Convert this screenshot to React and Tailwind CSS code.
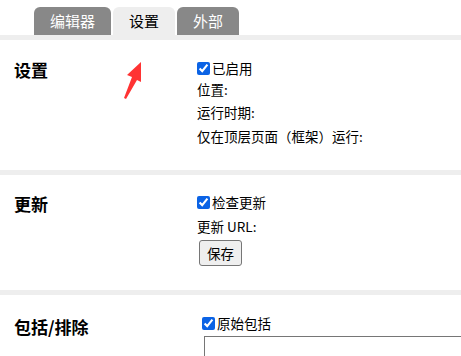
import React from 'react'

const font = { fontFamily: '"Noto Sans CJK SC", "Liberation Sans", sans-serif' }

function Check({ label, className = '' }) {
  return (
    <label className={`flex items-center gap-[2px] ${className}`}>
      <input type="checkbox" defaultChecked className="m-0 h-[13px] w-[13px] accent-[#0b63e5]" />
      <span>{label}</span>
    </label>
  )
}

function Tab({ children, active }) {
  return (
    <div
      className={
        active
          ? 'h-[28px] rounded-t-[6px] bg-[#eeeeee] px-[16px] text-[15px] leading-[28px] text-black'
          : 'h-[28px] rounded-t-[6px] bg-[#888888] px-[16px] text-[15px] leading-[28px] text-white'
      }
    >
      {children}
    </div>
  )
}

export default function App() {
  return (
    <div className="relative h-[356px] w-[461px] overflow-hidden bg-white text-[13.5px] text-black" style={font}>
      <div className="flex items-end gap-[2px] pl-[34px] pt-[7px]">
        <Tab>编辑器</Tab>
        <Tab active>设置</Tab>
        <Tab>外部</Tab>
      </div>

      <div className="h-[5px] bg-[#eeeeee]" />
      <section className="flex h-[130px]">
        <h2 className="w-[197px] pl-[14px] pt-[17px] text-[17px] font-bold">设置</h2>
        <div className="pt-[19px] leading-[18px]">
          <Check label="已启用" />
          <div className="mt-[3px]">位置:</div>
          <div className="mt-[5px]">运行时期:</div>
          <div className="mt-[6px]">仅在顶层页面（框架）运行:</div>
        </div>
      </section>

      <div className="h-[5px] bg-[#eeeeee]" />
      <section className="flex h-[115px]">
        <h2 className="w-[197px] pl-[14px] pt-[16px] text-[17px] font-bold">更新</h2>
        <div className="pt-[18px] leading-[18px]">
          <Check label="检查更新" />
          <div className="mt-[6px]">更新 URL:</div>
          <button className="ml-[2px] mt-[5px] h-[26px] w-[43px] rounded-[3px] border border-[#767676] bg-[#efefef] text-[13.5px]">
            保存
          </button>
        </div>
      </section>

      <div className="h-[5px] bg-[#eeeeee]" />
      <section className="flex">
        <h2 className="w-[202px] shrink-0 pl-[14px] pt-[19px] text-[17px] font-bold">包括/排除</h2>
        <div className="flex-1 pt-[19px] leading-[18px]">
          <Check label="原始包括" />
          <textarea className="ml-[2px] mt-[4px] block h-[60px] w-[300px] border border-[#767676]" />
        </div>
      </section>

      <svg className="absolute left-[118px] top-[58px]" width="30" height="45" viewBox="0 0 30 45">
        <polygon points="23,4 9,17 14,19 6,40 8,41 19,22 23,24" fill="#ff3333" />
      </svg>
    </div>
  )
}
